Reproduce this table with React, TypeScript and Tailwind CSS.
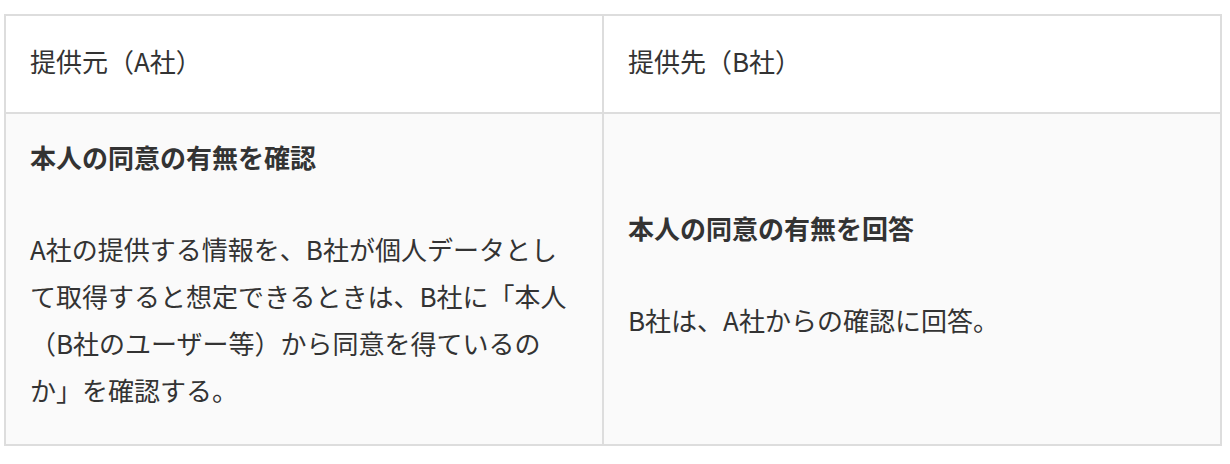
import React from 'react'

const font = { fontFamily: '"Noto Sans CJK JP", "Noto Sans", sans-serif' }

const App = () => {
  return (
    <div className="w-[1230px] h-[464px] bg-white pt-[14px] pl-[4px]" style={font}>
      <div className="w-[1218px] border-2 border-[#dddddd] grid grid-cols-[598px_616px] text-[26px] leading-[47px] text-[#333333]">
        {/* Header */}
        <div className="border-r-2 border-b-2 border-[#dddddd] bg-white pl-6 pt-[21px] pb-[28px]">
          提供元（A社）
        </div>
        <div className="border-b-2 border-[#dddddd] bg-white pl-6 pt-[21px] pb-[28px]">
          提供先（B社）
        </div>

        {/* Body */}
        <div className="border-r-2 border-[#dddddd] bg-[#fafafa] pl-6 pr-4 pt-[19px] pb-[31px]">
          <p className="font-bold mb-[45px]">本人の同意の有無を確認</p>
          <p>
            A社の提供する情報を、B社が個人データとし
            <br />
            て取得すると想定できるときは、B社に「本人
            <br />
            （B社のユーザー等）から同意を得ているの
            <br />
            か」を確認する。
          </p>
        </div>
        <div className="bg-[#fafafa] pl-6 pr-4 pt-[19px] pb-[31px] flex flex-col justify-center">
          <p className="font-bold mb-[45px]">本人の同意の有無を回答</p>
          <p>B社は、A社からの確認に回答。</p>
        </div>
      </div>
    </div>
  )
}

export default App
